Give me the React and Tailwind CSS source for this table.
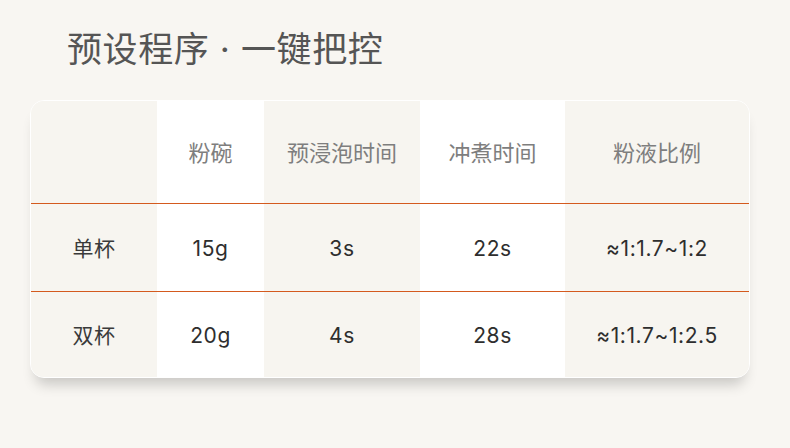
export default function App() {
  const cols = "grid grid-cols-[126px_107px_156px_145px_184px]";
  const font = { fontFamily: 'Inter, "Noto Sans CJK SC", sans-serif' };
  const rows = [
    ["单杯", "15g", "3s", "22s", "≈1:1.7~1:2"],
    ["双杯", "20g", "4s", "28s", "≈1:1.7~1:2.5"],
  ];
  const bg = ["bg-[#f7f5f0]", "bg-white", "bg-[#f7f5f0]", "bg-white", "bg-[#f7f5f0]"];
  return (
    <div className="w-[790px] h-[448px] bg-[#f8f6f2] overflow-hidden" style={font}>
      <div className="pt-[30px] pl-[67px] text-[35px] leading-[38px] font-normal text-[#555555] tracking-[0.6px]">
        预设程序 · 一键把控
      </div>
      <div className="ml-[30px] mt-[32px] w-[720px] rounded-[14px] border border-white bg-[#f7f5f0] overflow-hidden shadow-[0_12px_14px_-6px_rgba(0,0,0,0.2)]">
        <div className={cols + " h-[102px]"}>
          {["", "粉碗", "预浸泡时间", "冲煮时间", "粉液比例"].map((t, i) => (
            <div key={i} className={bg[i] + " flex items-center justify-center pt-[2px] text-[22px] text-[#7e7e7e] font-normal"}>
              {t}
            </div>
          ))}
        </div>
        {rows.map((r, ri) => (
          <div key={ri} className={cols + " border-t border-[#d45a1e] " + (ri === 0 ? "h-[88px]" : "h-[86px]")}>
            {r.map((t, i) => (
              <div key={i} className={bg[i] + " flex items-center justify-center pt-[2px] text-[21px] tracking-[0.6px] font-normal " + (i === 0 ? "text-[#3a3a3a]" : "text-[#2e2e2e]")}>
                {t}
              </div>
            ))}
          </div>
        ))}
      </div>
    </div>
  );
}
